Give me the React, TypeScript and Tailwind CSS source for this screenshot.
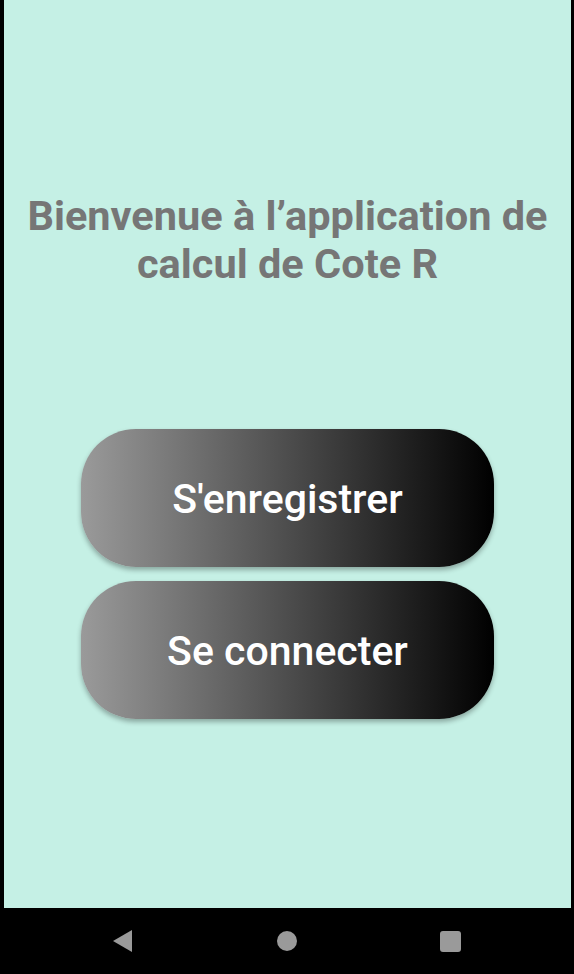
export default function App() {
  return (
    <div className="flex h-[974px] w-[574px] flex-col bg-black font-['Roboto',sans-serif]">
      <main className="ml-[4px] mr-[3px] flex h-[908px] flex-col items-center bg-[#c5f0e5]">
        <h1 className="mt-[192px] whitespace-nowrap text-center text-[41.5px] font-bold leading-[48px] text-[#767676]">
          Bienvenue à l’application de
          <br />
          calcul de Cote R
        </h1>
        <div className="mt-[141px] flex flex-col gap-[14px]">
          <button className="h-[138px] w-[413px] rounded-[55px] bg-[linear-gradient(to_right,#9a9a9a,#000000)] pt-[4px] text-[41px] font-medium text-white shadow-[0_3px_5px_rgba(0,0,0,0.3)]">
            S'enregistrer
          </button>
          <button className="h-[138px] w-[413px] rounded-[55px] bg-[linear-gradient(to_right,#9a9a9a,#000000)] pt-[4px] text-[41px] font-medium text-white shadow-[0_3px_5px_rgba(0,0,0,0.3)]">
            Se connecter
          </button>
        </div>
      </main>
      <nav className="flex flex-1 items-center justify-center">
        <div className="flex items-center">
          <svg width="20" height="22" viewBox="0 0 20 22" className="mr-[144px]">
            <path d="M19 0 L19 22 L0 11 Z" fill="#9a9a9a" />
          </svg>
          <div className="mr-[143px] h-[20px] w-[20px] rounded-full bg-[#9a9a9a]" />
          <div className="h-[21px] w-[21px] rounded-[3px] bg-[#9a9a9a]" />
        </div>
      </nav>
    </div>
  );
}
